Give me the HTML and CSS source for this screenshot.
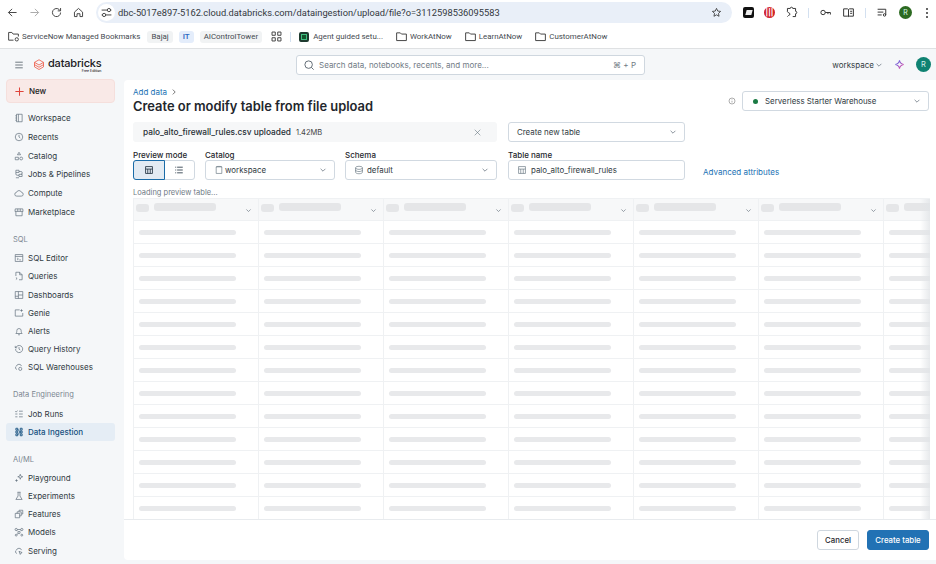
FILE: index.html
```html
<!DOCTYPE html>
<html lang="en">
<head>
  <meta charset="UTF-8" />
  <title>Create or modify table from file upload</title>
  <link rel="stylesheet" href="styles.css">
</head>
<body>

  <div class="toolbar">
    <div class="nav-icons">
      <svg class="ic" viewBox="0 0 16 16"><path d="M13 8H3M7.500 3.500 3 8l4.500 4.500"/></svg>
      <svg class="ic faint" viewBox="0 0 16 16"><path d="M3 8h10M8.500 3.500 13 8l-4.500 4.500"/></svg>
      <svg class="ic" viewBox="0 0 16 16"><path d="M13 8a5 5 0 1 1-1.500-3.500L13 6M13 2.500V6H9.500"/></svg>
      <svg class="ic" viewBox="0 0 16 16"><path d="M3 7.500 8 3l5 4.500V13h-3.200V9.500H6.200V13H3z"/></svg>
    </div>
    <div class="omnibox">
      <span class="site-btn"><svg class="ic small" viewBox="0 0 16 16"><path d="M2 5h7M13 5h1M2 11h1M7 11h7"/><circle cx="11" cy="5" r="2"/><circle cx="5" cy="11" r="2"/></svg></span>
      <span class="url">dbc-5017e897-5162.cloud.databricks.com/dataingestion/upload/file?o=3112598536095583</span>
      <svg class="ic star" viewBox="0 0 16 16"><path d="m8 2 1.800 3.900 4.200.500-3.100 2.900.800 4.200L8 11.400l-3.700 2.100.800-4.200L2 6.400l4.200-.500z"/></svg>
    </div>
    <div class="ext-icons">
      <span class="ext-black"><i></i></span>
      <span class="ext-red">|||</span>
      <svg class="ic" viewBox="0 0 16 16"><path d="M3 3h3.500a1.500 1.500 0 0 1 3 0H13v3.500a1.500 1.500 0 0 1 0 3V13H9.500M3 13l1.500-1.500a1.500 1.500 0 0 0 0-3L3 7V3"/></svg>
      <span class="sep"></span>
      <svg class="ic" viewBox="0 0 16 16"><circle cx="5" cy="8" r="2.700"/><path d="M7.700 8H14v2.500M11 8v2"/></svg>
      <svg class="ic" viewBox="0 0 16 16"><path d="M2 3.500h5l1 1 1-1h5v9H9l-1 .500-1-.500H2zM8 4.500V13M10 6.500h2.500M10 9h2.500"/></svg>
      <span class="sep"></span>
      <svg class="ic" viewBox="0 0 16 16"><path d="M2 4h10M2 7.500h7M2 11h5M12 4v7"/><circle cx="10.500" cy="11" r="1.500"/></svg>
      <span class="chrome-avatar">R</span>
      <span class="kebab"><i></i><i></i><i></i></span>
    </div>
  </div>

  <div class="bookmarks">
    <span class="bm first"><svg class="ic small" viewBox="0 0 16 16"><path d="M8 12.500H2V3h4l1.500 2H14v3"/><circle cx="12" cy="11.500" r="2"/></svg>ServiceNow Managed Bookmarks</span>
    <span class="bm chip">Bajaj</span>
    <span class="bm chip blue">IT</span>
    <span class="bm chip">AIControlTower</span>
    <svg class="ic small apps" viewBox="0 0 16 16"><path d="M2.500 2.500h4v4h-4zM9.500 2.500h4v4h-4zM2.500 9.500h4v4h-4zM9.500 9.500h4v4h-4z"/></svg>
    <span class="sep"></span>
    <span class="bm agent"><span class="agent-icon"></span>Agent guided setu...</span>
    <span class="bm folder"><svg class="ic small" viewBox="0 0 16 16"><path d="M2 13V3.500h4.500L8 5h6v8z"/></svg>WorkAtNow</span>
    <span class="bm folder"><svg class="ic small" viewBox="0 0 16 16"><path d="M2 13V3.500h4.500L8 5h6v8z"/></svg>LearnAtNow</span>
    <span class="bm folder"><svg class="ic small" viewBox="0 0 16 16"><path d="M2 13V3.500h4.500L8 5h6v8z"/></svg>CustomerAtNow</span>
  </div>

  <div class="app">
    <header class="app-header">
      <div class="brand">
        <svg class="ic burger" viewBox="0 0 16 16"><path d="M2 3.500h12M2 8h12M2 12.500h12"/></svg>
        <svg class="logo" viewBox="0 0 16 16"><path d="M8 1 14 4.500 8 8 2 4.500zM2 7.500 8 11l6-3.500M2 10.500 8 14l6-3.500M2 4.500v6M14 4.500v6"/></svg>
        <div class="brand-name">databricks<small>Free Edition</small></div>
      </div>
      <div class="search">
        <svg class="ic" viewBox="0 0 16 16"><circle cx="7.500" cy="7.500" r="5"/><path d="m11.200 11.200 3 3"/></svg>
        <span class="search-text">Search data, notebooks, recents, and more...</span>
        <span>⌘ + P</span>
      </div>
      <div class="header-right">
        <span class="ws">workspace<svg class="chev" viewBox="0 0 10 10"><path d="m2 3.500 3 3 3-3"/></svg></span>
        <svg class="sparkle" viewBox="0 0 16 16"><defs><linearGradient id="spark" x1="0" y1="0" x2="1" y2="1"><stop offset="0" stop-color="#4a6cf0"/><stop offset="1" stop-color="#f0479a"/></linearGradient></defs><path d="M8 2c.6 3.400 2.600 5.400 6 6-3.400.6-5.400 2.600-6 6-.6-3.400-2.600-5.400-6-6 3.400-.6 5.400-2.600 6-6z" stroke="url(#spark)"/></svg>
        <span class="avatar">R</span>
      </div>
    </header>

    <div class="app-body">
      <nav class="sidebar">
        <div class="new-btn"><svg class="plus" viewBox="0 0 16 16"><path d="M8 2v12M2 8h12"/></svg>New</div>

        <div class="nav-group">
          <a class="nav-item"><svg class="ic" viewBox="0 0 16 16"><path d="M4 2h9v12H4zM7 2v12M2 4.500h2M2 8h2M2 11.500h2"/></svg>Workspace</a>
          <a class="nav-item"><svg class="ic" viewBox="0 0 16 16"><circle cx="8" cy="8" r="6"/><path d="M8 4.500V8l2 1.500"/></svg>Recents</a>
          <a class="nav-item"><svg class="ic" viewBox="0 0 16 16"><path d="M8 2l2.500 4h-5zM2 10h5v4H2z"/><circle cx="11.500" cy="12" r="2.300"/></svg>Catalog</a>
          <a class="nav-item"><svg class="ic" viewBox="0 0 16 16"><path d="M3 2h5v3.500H3zM8 8.500h5V12H8zM8 4h3a2 2 0 0 1 0 4.500M8 10H5a2 2 0 0 1-2-2V5.500M3 14h5"/></svg>Jobs &amp; Pipelines</a>
          <a class="nav-item"><svg class="ic" viewBox="0 0 16 16"><path d="M4.500 13a3 3 0 0 1-.5-6 4.200 4.200 0 0 1 8 0 3 3 0 0 1-.5 6z"/></svg>Compute</a>
          <a class="nav-item"><svg class="ic" viewBox="0 0 16 16"><path d="M3 7v7h10V7M2 3h12l.500 4h-13zM6 3v4M10 3v4"/></svg>Marketplace</a>
        </div>

        <div class="nav-group">
          <div class="nav-title">SQL</div>
          <a class="nav-item tight"><svg class="ic" viewBox="0 0 16 16"><path d="M2 2.500h12v11H2zM2 5.500h12M5 8l2 1.500L5 11M8.500 11H11"/></svg>SQL Editor</a>
          <a class="nav-item tight"><svg class="ic" viewBox="0 0 16 16"><path d="M3 8V2h6l4 4v8H8M9 2v4h4M3 10.500l2 1.500-2 1.500"/></svg>Queries</a>
          <a class="nav-item tight"><svg class="ic" viewBox="0 0 16 16"><path d="M2 2.500h12v11H2zM7 2.500v11M7 8h7M2 10h5"/></svg>Dashboards</a>
          <a class="nav-item tight"><svg class="ic" viewBox="0 0 16 16"><path d="M9 3H2v10h12V8M12 2v4M10 4h4"/></svg>Genie</a>
          <a class="nav-item tight"><svg class="ic" viewBox="0 0 16 16"><path d="M3 12c1-1 1.500-2 1.500-4.500a3.500 3.500 0 0 1 7 0c0 2.500.5 3.500 1.500 4.500zM6.500 14h3"/></svg>Alerts</a>
          <a class="nav-item tight"><svg class="ic" viewBox="0 0 16 16"><path d="M2.500 8a5.700 5.700 0 1 0 1.700-4L2 6M2 3v3h3M8 5v3.200l2 1.300"/></svg>Query History</a>
          <a class="nav-item tight"><svg class="ic" viewBox="0 0 16 16"><path d="M4.500 12a3 3 0 0 1-.5-5.500 4.200 4.200 0 0 1 8 0"/><circle cx="10" cy="11" r="2.500"/></svg>SQL Warehouses</a>
        </div>

        <div class="nav-group">
          <div class="nav-title">Data Engineering</div>
          <a class="nav-item tight"><svg class="ic" viewBox="0 0 16 16"><path d="M8 3.500h6M8 8h6M8 12.500h6M2 3.500l1.500 1.500L5.500 2.500M2 8h3.500M2 12.500h3.500"/></svg>Job Runs</a>
          <a class="nav-item tight active"><svg class="ic" viewBox="0 0 16 16"><path d="M3 2h3v3H3zM3 6.500h3v3H3zM3 11h3v3H3zM10 2h3v3h-3zM10 6.500h3v3h-3zM10 11h3v3h-3zM6 3.500l4 4.500M6 12.500l4-4.500"/></svg>Data Ingestion</a>
        </div>

        <div class="nav-group">
          <div class="nav-title">AI/ML</div>
          <a class="nav-item tight"><svg class="ic" viewBox="0 0 16 16"><path d="M10 2l1 3 3 1-3 1-1 3-1-3-3-1 3-1zM4 10v4M2 12h4"/></svg>Playground</a>
          <a class="nav-item tight"><svg class="ic" viewBox="0 0 16 16"><path d="M5.500 2h5M6.500 2v6L3 13.500h10L9.500 8V2"/></svg>Experiments</a>
          <a class="nav-item tight"><svg class="ic" viewBox="0 0 16 16"><path d="M2 7h7v7H2zM5 7V4.500h6.500V11H9M8 4.500V2h6v6h-2.500"/></svg>Features</a>
          <a class="nav-item tight"><svg class="ic" viewBox="0 0 16 16"><circle cx="3.500" cy="4" r="1.800"/><circle cx="12.500" cy="4" r="1.800"/><circle cx="8" cy="9" r="1.800"/><circle cx="3.500" cy="13" r="1.500"/><circle cx="12.500" cy="13" r="1.500"/><path d="M5.300 4h5.400M4.800 5.500l2 2M11 5.500l-2 2M6.800 10.300l-2 1.500"/></svg>Models</a>
          <a class="nav-item tight"><svg class="ic" viewBox="0 0 16 16"><path d="M4.500 12a3 3 0 0 1-.5-5.500 4.200 4.200 0 0 1 8 0M8 8.500l5 2-2 1-1 2z"/></svg>Serving</a>
        </div>
      </nav>

      <main class="panel">
        <div class="panel-content">
          <div class="crumbs"><a>Add data</a><svg class="chev" viewBox="0 0 10 10"><path d="m3.500 2 3 3-3 3"/></svg></div>
          <div class="title-row">
            <h1>Create or modify table from file upload</h1>
            <div class="warehouse-wrap">
              <svg class="ic info" viewBox="0 0 16 16"><circle cx="8" cy="8" r="6"/><path d="M8 5v1M8 7.500V11"/></svg>
              <div class="select warehouse"><i class="dot"></i><span>Serverless Starter Warehouse</span><svg class="chev" viewBox="0 0 10 10"><path d="m2 3.500 3 3 3-3"/></svg></div>
            </div>
          </div>

          <div class="upload-row">
            <div class="file-bar">
              <span class="file-name">palo_alto_firewall_rules.csv uploaded</span>
              <span class="file-size">1.42MB</span>
              <svg class="ic close" viewBox="0 0 16 16"><path d="m3 3 10 10M13 3 3 13"/></svg>
            </div>
            <div class="select mode"><span>Create new table</span><svg class="chev" viewBox="0 0 10 10"><path d="m2 3.500 3 3 3-3"/></svg></div>
          </div>

          <div class="fields-row">
            <div class="field">
              <label>Preview mode</label>
              <div class="toggle">
                <span class="toggle-btn on"><svg class="ic" viewBox="0 0 16 16"><path d="M2.500 2.500h11v11h-11zM2.500 6.500h11M6 6.500v7M10 6.500v7"/></svg></span>
                <span class="toggle-btn"><svg class="ic" viewBox="0 0 16 16"><path d="M2 3.500h1.500M5 3.500h9M2 8h1.500M5 8h9M2 12.500h1.500M5 12.500h9"/></svg></span>
              </div>
            </div>
            <div class="field field-catalog">
              <label>Catalog</label>
              <div class="select"><svg class="ic" viewBox="0 0 16 16"><path d="M3.500 3v10.500h9V3zM3.500 3c0-1 9-1 9 0"/></svg><span>workspace</span><svg class="chev" viewBox="0 0 10 10"><path d="m2 3.500 3 3 3-3"/></svg></div>
            </div>
            <div class="field field-schema">
              <label>Schema</label>
              <div class="select"><svg class="ic" viewBox="0 0 16 16"><ellipse cx="8" cy="4.500" rx="5.500" ry="2.500"/><path d="M2.500 4.500v7c0 1.400 2.500 2.500 5.500 2.500s5.500-1.100 5.500-2.500v-7M2.500 8c0 1.400 2.500 2.500 5.500 2.500s5.500-1.100 5.500-2.500"/></svg><span>default</span><svg class="chev" viewBox="0 0 10 10"><path d="m2 3.500 3 3 3-3"/></svg></div>
            </div>
            <div class="field field-table">
              <label>Table name</label>
              <div class="select"><svg class="ic" viewBox="0 0 16 16"><path d="M2.500 2.500h11v11h-11zM2.500 6.500h11M6 6.500v7M10 6.500v7"/></svg><span>palo_alto_firewall_rules</span></div>
            </div>
            <a class="advanced">Advanced attributes</a>
          </div>

          <div class="loading">Loading preview table...</div>

          <div class="preview">
            <div class="row head">
              <div class="cell"><i class="sk-dot"></i><i class="sk-title"></i><svg class="chev" viewBox="0 0 10 10"><path d="m2 3.500 3 3 3-3"/></svg></div>
              <div class="cell"><i class="sk-dot"></i><i class="sk-title"></i><svg class="chev" viewBox="0 0 10 10"><path d="m2 3.500 3 3 3-3"/></svg></div>
              <div class="cell"><i class="sk-dot"></i><i class="sk-title"></i><svg class="chev" viewBox="0 0 10 10"><path d="m2 3.500 3 3 3-3"/></svg></div>
              <div class="cell"><i class="sk-dot"></i><i class="sk-title"></i><svg class="chev" viewBox="0 0 10 10"><path d="m2 3.500 3 3 3-3"/></svg></div>
              <div class="cell"><i class="sk-dot"></i><i class="sk-title"></i><svg class="chev" viewBox="0 0 10 10"><path d="m2 3.500 3 3 3-3"/></svg></div>
              <div class="cell"><i class="sk-dot"></i><i class="sk-title"></i><svg class="chev" viewBox="0 0 10 10"><path d="m2 3.500 3 3 3-3"/></svg></div>
              <div class="cell"><i class="sk-dot"></i><i class="sk-title"></i><svg class="chev" viewBox="0 0 10 10"><path d="m2 3.500 3 3 3-3"/></svg></div>
            </div>
            <div class="row"><div class="cell"><i class="sk"></i></div><div class="cell"><i class="sk"></i></div><div class="cell"><i class="sk"></i></div><div class="cell"><i class="sk"></i></div><div class="cell"><i class="sk"></i></div><div class="cell"><i class="sk"></i></div><div class="cell"><i class="sk"></i></div></div>
            <div class="row"><div class="cell"><i class="sk"></i></div><div class="cell"><i class="sk"></i></div><div class="cell"><i class="sk"></i></div><div class="cell"><i class="sk"></i></div><div class="cell"><i class="sk"></i></div><div class="cell"><i class="sk"></i></div><div class="cell"><i class="sk"></i></div></div>
            <div class="row"><div class="cell"><i class="sk"></i></div><div class="cell"><i class="sk"></i></div><div class="cell"><i class="sk"></i></div><div class="cell"><i class="sk"></i></div><div class="cell"><i class="sk"></i></div><div class="cell"><i class="sk"></i></div><div class="cell"><i class="sk"></i></div></div>
            <div class="row"><div class="cell"><i class="sk"></i></div><div class="cell"><i class="sk"></i></div><div class="cell"><i class="sk"></i></div><div class="cell"><i class="sk"></i></div><div class="cell"><i class="sk"></i></div><div class="cell"><i class="sk"></i></div><div class="cell"><i class="sk"></i></div></div>
            <div class="row"><div class="cell"><i class="sk"></i></div><div class="cell"><i class="sk"></i></div><div class="cell"><i class="sk"></i></div><div class="cell"><i class="sk"></i></div><div class="cell"><i class="sk"></i></div><div class="cell"><i class="sk"></i></div><div class="cell"><i class="sk"></i></div></div>
            <div class="row"><div class="cell"><i class="sk"></i></div><div class="cell"><i class="sk"></i></div><div class="cell"><i class="sk"></i></div><div class="cell"><i class="sk"></i></div><div class="cell"><i class="sk"></i></div><div class="cell"><i class="sk"></i></div><div class="cell"><i class="sk"></i></div></div>
            <div class="row"><div class="cell"><i class="sk"></i></div><div class="cell"><i class="sk"></i></div><div class="cell"><i class="sk"></i></div><div class="cell"><i class="sk"></i></div><div class="cell"><i class="sk"></i></div><div class="cell"><i class="sk"></i></div><div class="cell"><i class="sk"></i></div></div>
            <div class="row"><div class="cell"><i class="sk"></i></div><div class="cell"><i class="sk"></i></div><div class="cell"><i class="sk"></i></div><div class="cell"><i class="sk"></i></div><div class="cell"><i class="sk"></i></div><div class="cell"><i class="sk"></i></div><div class="cell"><i class="sk"></i></div></div>
            <div class="row"><div class="cell"><i class="sk"></i></div><div class="cell"><i class="sk"></i></div><div class="cell"><i class="sk"></i></div><div class="cell"><i class="sk"></i></div><div class="cell"><i class="sk"></i></div><div class="cell"><i class="sk"></i></div><div class="cell"><i class="sk"></i></div></div>
            <div class="row"><div class="cell"><i class="sk"></i></div><div class="cell"><i class="sk"></i></div><div class="cell"><i class="sk"></i></div><div class="cell"><i class="sk"></i></div><div class="cell"><i class="sk"></i></div><div class="cell"><i class="sk"></i></div><div class="cell"><i class="sk"></i></div></div>
            <div class="row"><div class="cell"><i class="sk"></i></div><div class="cell"><i class="sk"></i></div><div class="cell"><i class="sk"></i></div><div class="cell"><i class="sk"></i></div><div class="cell"><i class="sk"></i></div><div class="cell"><i class="sk"></i></div><div class="cell"><i class="sk"></i></div></div>
            <div class="row"><div class="cell"><i class="sk"></i></div><div class="cell"><i class="sk"></i></div><div class="cell"><i class="sk"></i></div><div class="cell"><i class="sk"></i></div><div class="cell"><i class="sk"></i></div><div class="cell"><i class="sk"></i></div><div class="cell"><i class="sk"></i></div></div>
            <div class="row"><div class="cell"><i class="sk"></i></div><div class="cell"><i class="sk"></i></div><div class="cell"><i class="sk"></i></div><div class="cell"><i class="sk"></i></div><div class="cell"><i class="sk"></i></div><div class="cell"><i class="sk"></i></div><div class="cell"><i class="sk"></i></div></div>
          </div>
        </div>

        <footer class="panel-footer">
          <button class="btn">Cancel</button>
          <button class="btn primary">Create table</button>
        </footer>
      </main>
    </div>
  </div>

</body>
</html>
```
FILE: styles.css
```css
* { box-sizing: border-box; }
body { margin: 0; width: 936px; height: 564px; overflow: hidden; background: #fff; font-family: "Inter", "Liberation Sans", sans-serif; color: #1f272d; display: flex; flex-direction: column; }
i { display: block; }
svg { flex: none; }

.ic { width: 12px; height: 12px; fill: none; stroke: #55606a; stroke-width: 1.2; }
.ic.small { width: 13px; height: 13px; stroke: #444; }
.chev { width: 8px; height: 8px; fill: none; stroke: #6f7a85; stroke-width: 1; }

/* browser bars */
.toolbar { height: 25px; display: flex; align-items: center; flex: none; }
.nav-icons { width: 96px; padding-left: 6px; display: flex; gap: 9px; }
.nav-icons .ic { width: 13px; height: 13px; stroke: #444; }
.nav-icons .faint { stroke: #aaa; }
.omnibox { width: 636px; height: 21px; background: #e9eff8; border-radius: 11px; display: flex; align-items: center; padding: 0 10px 0 2px; }
.site-btn { width: 17px; height: 17px; border-radius: 50%; background: #fff; display: flex; align-items: center; justify-content: center; }
.url { margin-left: 3px; flex: 1; font-family: "Roboto", sans-serif; font-size: 9.3px; color: #33383d; white-space: nowrap; }
.star { stroke: #333; width: 11px; height: 11px; }
.ext-icons { flex: 1; display: flex; align-items: center; padding-left: 11px; gap: 10px; }
.ext-icons .ic { width: 13px; height: 13px; stroke: #333; }
.ext-black { width: 11px; height: 11px; background: #111; border-radius: 2px; display: flex; align-items: center; justify-content: center; }
.ext-black i { width: 6px; height: 5px; background: #eee; transform: skewX(-15deg); }
.ext-red { width: 11px; height: 11px; background: #d0202a; border-radius: 50%; color: #fff; font-size: 7px; line-height: 11px; text-align: center; font-weight: 700; }
.sep { width: 1px; height: 10px; background: #d3e0f0; flex: none; }
.chrome-avatar { width: 13px; height: 13px; border-radius: 50%; background: #2c6a21; color: #dfe; font-size: 7px; line-height: 13px; text-align: center; }
.kebab { display: flex; flex-direction: column; gap: 2px; margin-left: 4px; }
.kebab i { width: 2px; height: 2px; border-radius: 50%; background: #333; }

.bookmarks { height: 24px; flex: none; display: flex; align-items: center; padding-left: 7px; gap: 6px; border-bottom: 1px solid #dfe1e3; font-family: "Roboto", sans-serif; font-size: 7.900px; color: #444a50; white-space: nowrap; }
.bm { display: flex; align-items: center; gap: 2px; }
.bm.first { margin-right: 1px; }
.chip { background: #f1f3f4; padding: 0 4px; height: 12px; border-radius: 3px; }
.chip.blue { background: #e4edfb; color: #2a66c0; font-weight: 500; }
.apps { margin-left: 2px; margin-right: 1px; }
.agent { gap: 4px; margin-left: 2px; }
.folder { margin-left: 6px; }
.agent-icon { width: 10px; height: 10px; border-radius: 2px; background: #14532d; border: 2px solid #1e3a2f; box-shadow: inset 0 0 0 1px #3fbf7f; }

/* app shell */
.app { flex: 1; min-height: 0; background: #f5f7f9; display: flex; flex-direction: column; }
.app-header { height: 31px; flex: none; display: flex; align-items: center; }
.brand { width: 296px; display: flex; align-items: center; padding-left: 14px; }
.burger { width: 10px; height: 10px; stroke: #46525c; }
.logo { width: 12px; height: 12px; margin-left: 9px; fill: none; stroke: #ee5a47; stroke-width: 1.100; }
.brand-name { margin-left: 3px; font-size: 11px; font-weight: 500; letter-spacing: -0.2px; color: #1b2024; line-height: 12px; }
.brand-name small { display: block; font-size: 3.500px; line-height: 4px; text-align: right; font-weight: 500; letter-spacing: 0; }
.search { width: 349px; height: 20px; background: #fff; border: 1px solid #cfd7df; border-radius: 3px; display: flex; align-items: center; padding: 0 8px 0 6px; color: #717b85; font-size: 8px; }
.search-text { margin-left: 4px; flex: 1; }
.header-right { flex: 1; display: flex; align-items: center; justify-content: flex-end; padding-right: 5px; font-size: 8px; }
.ws { display: flex; align-items: center; gap: 1px; color: #333b42; margin-right: 11px; }
.sparkle { width: 11px; height: 11px; fill: none; stroke-width: 1.500; margin-right: 11px; }
.avatar { width: 15px; height: 15px; border-radius: 50%; background: #0f8272; color: #d4eee9; font-size: 7.500px; line-height: 15px; text-align: center; }

.app-body { flex: 1; min-height: 0; display: flex; }
.sidebar { width: 124px; flex: none; padding: 0 9px 0 6px; display: flex; flex-direction: column; }
.new-btn { height: 24px; flex: none; margin-top: -1px; background: #f9e9e7; border: 1px solid #f5dfdc; border-radius: 4px; display: flex; align-items: center; padding-left: 7px; gap: 4px; font-size: 8px; font-weight: 500; color: #222; }
.plus { width: 11px; height: 11px; fill: none; stroke: #e0443a; stroke-width: 1.500; }
.nav-group { margin-bottom: 10px; }
.new-btn + .nav-group { margin-top: 6px; }
.nav-title { height: 18px; line-height: 18px; padding-left: 7px; font-size: 7.500px; color: #7a8691; }
.nav-item { height: 18.700px; display: flex; align-items: center; gap: 4px; padding-left: 8px; font-size: 8px; color: #303a42; border-radius: 3px; white-space: nowrap; }
.nav-item.tight { height: 18.200px; }
.nav-item .ic { width: 10px; height: 10px; stroke: #5f6e7a; stroke-width: 1.100; }
.nav-item.active { background: #e5edf5; color: #15507f; font-weight: 500; }
.nav-item.active .ic { stroke: #15507f; stroke-width: 1.400; }

/* panel */
.panel { flex: 1; min-width: 0; background: #fff; border-radius: 4px 0 0 4px; margin-bottom: 4px; display: flex; flex-direction: column; }
.panel-content { flex: 1; min-height: 0; padding: 7px 6px 0 9px; overflow: hidden; }
.crumbs { height: 9px; display: flex; align-items: center; gap: 3px; font-size: 8px; color: #2272b4; }
.crumbs .chev { stroke: #555; }
.title-row { height: 24px; margin-top: 2px; display: flex; align-items: flex-start; justify-content: space-between; }
h1 { margin: 0; font-size: 12.900px; line-height: 18px; font-weight: 600; color: #1f272d; }
.warehouse-wrap { display: flex; align-items: center; gap: 6px; margin-right: 1px; margin-top: -7px; }
.info { width: 8px; height: 8px; stroke: #777; }

.select { height: 20px; background: #fff; border: 1px solid #d1d9e1; border-radius: 3px; display: flex; align-items: center; padding: 0 7px 0 8px; gap: 4px; font-size: 7.900px; color: #303a42; }
.select span { flex: 1; white-space: nowrap; }
.select .ic { width: 10px; height: 10px; stroke: #5f6e7a; stroke-width: 1; }
.warehouse { width: 187px; padding-left: 10px; }
.dot { width: 5px; height: 5px; border-radius: 50%; background: #1a7a43; margin-right: 3px; }

.upload-row { display: flex; gap: 11px; height: 20px; }
.file-bar { width: 364px; height: 20px; background: #f6f7f8; border-radius: 3px; display: flex; align-items: center; padding: 0 10px; font-size: 8.300px; color: #262e35; }
.file-name { font-weight: 500; }
.file-size { margin-left: 5px; font-size: 7.500px; flex: 1; color: #444; }
.close { width: 9px; height: 9px; stroke: #5f6e7a; stroke-width: 1; margin-right: 5px; }
.select.mode { width: 177px; flex: none; }

.fields-row { display: flex; gap: 10px; height: 38px; }
.field { display: flex; flex-direction: column; padding-top: 8px; }
.field label { font-size: 8px; font-weight: 500; line-height: 10px; color: #1f272d; white-space: nowrap; }
.toggle { width: 62px; height: 20px; display: flex; border: 1px solid #d1d9e1; border-radius: 3px; }
.toggle-btn { flex: 1; display: flex; align-items: center; justify-content: center; }
.toggle-btn.on { background: #e3ebf3; border: 1px solid #1b6ca8; border-radius: 3px 0 0 3px; margin: -1px 0 -1px -1px; }
.toggle-btn .ic { width: 10px; height: 10px; stroke: #1f2f3d; stroke-width: 1.300; }
.field-catalog .select { width: 130px; }
.field-catalog .select { gap: 1px; }
.field-schema .select { width: 152px; gap: 3px; }
.field-table { margin-left: 1px; }
.field-table .select { width: 177px; }
.advanced { font-size: 8px; line-height: 10px; color: #2272b4; align-self: flex-end; margin: 0 0 3px 8px; }

.loading { margin-top: 8px; height: 9px; line-height: 9px; font-size: 7.500px; color: #6f7a85; }

.preview { margin-top: 1px; border-top: 1px solid #eff1f3; position: relative; }
.preview::after { content: ""; position: absolute; top: 0; bottom: 0; right: 0; width: 10px; background: linear-gradient(to right, rgba(225,228,231,0), rgba(225,228,231,0.8)); }
.row { display: flex; height: 23px; border-bottom: 1px solid #eff1f3; overflow: hidden; }
.row.head { height: 22px; background: #f7f8f9; }
.cell { width: 125px; flex: none; border-left: 1px solid #eff1f3; padding: 0 7px 0 5px; display: flex; align-items: center; position: relative; }
.sk { width: 97px; height: 5px; border-radius: 3px; background: #e8e9eb; }
.head .cell { align-items: flex-start; padding: 4px 0 0 2px; }
.sk-dot { width: 13px; height: 8px; border-radius: 3px; background: #e5e6e8; margin-top: 1px; }
.sk-title { width: 62px; height: 8px; border-radius: 3px; background: #e5e6e8; margin-left: 5px; }
.head .chev { position: absolute; right: 6px; top: 8px; width: 7px; height: 7px; }

.panel-footer { height: 41px; flex: none; border-top: 1px solid #e8ebee; display: flex; justify-content: flex-end; align-items: center; gap: 8px; padding: 0 7px 0 0; }
.btn { height: 20px; width: 42px; padding: 0; background: #fff; border: 1px solid #cfd7df; border-radius: 3px; font: 500 7.800px "Inter", sans-serif; color: #1f272d; }
.btn.primary { background: #2272b4; border-color: #2272b4; color: #fff; width: 62px; }
```
